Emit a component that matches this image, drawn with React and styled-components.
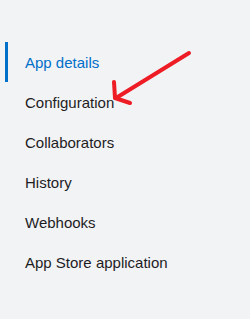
import React from "react";
import styled, { createGlobalStyle } from "styled-components";

const GlobalStyle = createGlobalStyle`
html, body {
  margin: 0;
  padding: 0;
  background: #f2f3f5;
}
body {
  font-family: "Liberation Sans", Arial, sans-serif;
}
`;

const items = [
  "App details",
  "Configuration",
  "Collaborators",
  "History",
  "Webhooks",
  "App Store application",
];

function App() {
  return (
    <>
      <GlobalStyle />
      <Page>
        <Nav>
          {items.map((label, i) => (
            <NavItem key={label} active={i === 0}>
              {label}
            </NavItem>
          ))}
        </Nav>
        <Arrow width="250" height="319" viewBox="0 0 250 319">
          <g stroke="#ee1c24" strokeWidth="4" strokeLinecap="round" fill="none">
            <line x1="189" y1="53" x2="116" y2="98" />
            <line x1="114" y1="82" x2="115" y2="98" />
            <line x1="115" y1="98" x2="130" y2="103" />
          </g>
        </Arrow>
      </Page>
    </>
  );
}

const Page = styled.div`
position: relative;
width: 250px;
height: 319px;
background: #f2f3f5;
overflow: hidden;
`;

const Nav = styled.nav`
display: flex;
flex-direction: column;
padding-top: 42px;
`;

const NavItem = styled.div`
height: 40px;
display: flex;
align-items: center;
margin-left: 5px;
border-left: 3px solid ${(p) => (p.active ? "#0070c9" : "transparent")};
padding-left: 17px;
font-size: 15px;
color: ${(p) => (p.active ? "#0070c9" : "#1d1d1f")};
`;

const Arrow = styled.svg`
position: absolute;
left: 0;
top: 0;
pointer-events: none;
`;

export default App;
